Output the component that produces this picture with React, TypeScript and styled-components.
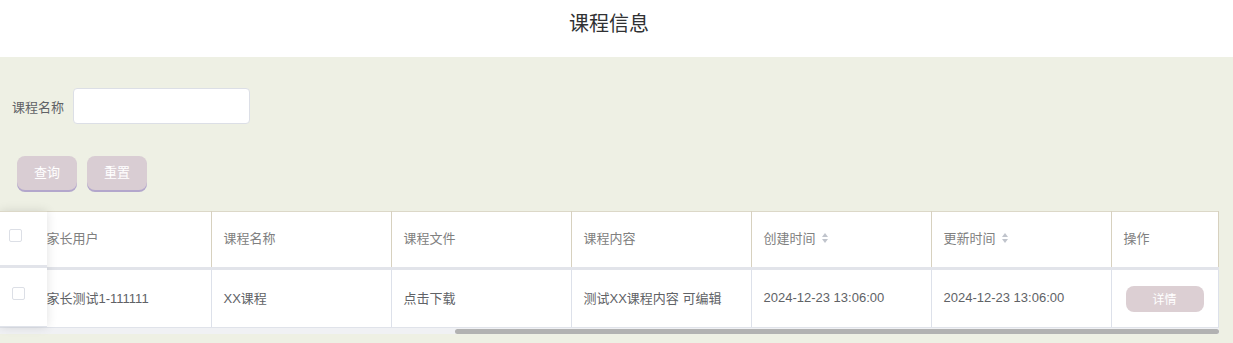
import { useEffect, useRef, useState } from 'react';
import styled, { createGlobalStyle } from 'styled-components';

const GlobalStyle = createGlobalStyle`
  html, body {
    margin: 0;
    padding: 0;
    background: #eef0e4;
    font-family: "Liberation Sans", "Noto Sans CJK SC", sans-serif;
    overflow: hidden;
  }
  * { box-sizing: border-box; }
`;

interface Column {
  key: string;
  label: string;
  width: number;
  sortable?: boolean;
}

// the first columns sit scrolled out of view, left of 家长用户
const columns: Column[] = [
  { key: 'check', label: '', width: 47 },
  { key: 'id', label: '', width: 180 },
  { key: 'courseId', label: '', width: 180 },
  { key: 'userId', label: '', width: 180 },
  { key: 'phone', label: '', width: 174 },
  { key: 'parent', label: '家长用户', width: 177 },
  { key: 'name', label: '课程名称', width: 180 },
  { key: 'file', label: '课程文件', width: 180 },
  { key: 'content', label: '课程内容', width: 180 },
  { key: 'created', label: '创建时间', width: 180, sortable: true },
  { key: 'updated', label: '更新时间', width: 180, sortable: true },
  { key: 'action', label: '操作', width: 107 },
];

const row: Record<string, string> = {
  parent: '家长测试1-111111',
  name: 'XX课程',
  file: '点击下载',
  content: '测试XX课程内容 可编辑',
  created: '2024-12-23 13:06:00',
  updated: '2024-12-23 13:06:00',
};

const CourseInfo = () => {
  const scrollRef = useRef<HTMLDivElement>(null);
  const [thumb, setThumb] = useState({ left: 0, width: 0 });

  useEffect(() => {
    const el = scrollRef.current;
    if (!el) return;
    el.scrollLeft = el.scrollWidth - el.clientWidth;
    const update = () => {
      const ratio = el.clientWidth / el.scrollWidth;
      setThumb({ left: el.scrollLeft * ratio, width: el.clientWidth * ratio });
    };
    update();
    el.addEventListener('scroll', update);
    return () => el.removeEventListener('scroll', update);
  }, []);

  return (
    <Page>
      <GlobalStyle />
      <Header>
        <Title>课程信息</Title>
      </Header>
      <Content>
        <SearchForm>
          <Label>课程名称</Label>
          <TextInput />
        </SearchForm>
        <Buttons>
          <ActionButton>查询</ActionButton>
          <ActionButton>重置</ActionButton>
        </Buttons>
        <TableWrap>
          <Scroller ref={scrollRef}>
            <Table>
              <colgroup>
                {columns.map((c) => (
                  <col key={c.key} style={{ width: c.width }} />
                ))}
              </colgroup>
              <thead>
                <tr>
                  {columns.map((c) => (
                    <Th key={c.key}>
                      {c.key === 'check' ? (
                        <Checkbox />
                      ) : (
                        <HeadLabel>
                          {c.label}
                          {c.sortable && (
                            <Caret>
                              <i />
                              <i />
                            </Caret>
                          )}
                        </HeadLabel>
                      )}
                    </Th>
                  ))}
                </tr>
              </thead>
              <tbody>
                <tr>
                  {columns.map((c) => (
                    <Td key={c.key}>
                      {c.key === 'check' && <Checkbox />}
                      {c.key === 'action' && <DetailButton>详情</DetailButton>}
                      {row[c.key]}
                    </Td>
                  ))}
                </tr>
              </tbody>
            </Table>
          </Scroller>
          <ScrollTrack>
            <ScrollThumb style={{ left: thumb.left, width: thumb.width }} />
          </ScrollTrack>
          <FixedColumn>
            <FixedHead>
              <Checkbox $offset={9} />
            </FixedHead>
            <FixedBody>
              <Checkbox $offset={12} />
            </FixedBody>
          </FixedColumn>
        </TableWrap>
      </Content>
    </Page>
  );
};

const Page = styled.div`
  width: 1233px;
  min-height: 343px;
  background: #eef0e4;
`;

const Header = styled.header`
  height: 57px;
  background: #ffffff;
  padding-right: 15px;
  display: flex;
  justify-content: center;
  align-items: center;
  padding-bottom: 12px;
`;

const Title = styled.h1`
  margin: 0;
  font-size: 20px;
  font-weight: normal;
  color: #303133;
  font-family: "Noto Sans CJK SC", sans-serif;
`;

const Content = styled.main`
  padding-top: 31px;
`;

const SearchForm = styled.div`
  display: flex;
  align-items: center;
  gap: 9px;
  padding-left: 12px;
`;

const Label = styled.span`
  font-size: 13px;
  color: #606266;
`;

const TextInput = styled.input`
  width: 177px;
  height: 36px;
  border: 1px solid #dcdfe6;
  border-radius: 4px;
  background: #ffffff;
  outline: none;
`;

const Buttons = styled.div`
  display: flex;
  gap: 10px;
  padding: 32px 0 21px 17px;
`;

const ActionButton = styled.button`
  width: 60px;
  height: 34px;
  border: none;
  border-radius: 8px;
  background: #d9cdd3;
  box-shadow: 0 2px 0 #b3a7cc;
  color: #ffffff;
  font-size: 13px;
  font-family: "Noto Sans CJK SC", sans-serif;
  padding: 0 0 4px;
`;

const TableWrap = styled.div`
  position: relative;
  width: 1219px;
`;

const Scroller = styled.div`
  overflow-x: auto;
  overflow-y: hidden;
  scrollbar-width: none;

  &::-webkit-scrollbar {
    display: none;
  }
`;

const ScrollTrack = styled.div`
  position: relative;
  height: 6px;
  background: #f0f1f4;
`;

const ScrollThumb = styled.div`
  position: absolute;
  top: 1px;
  height: 5px;
  border-radius: 3px;
  background: #b2b2b2;
`;

const Table = styled.table`
  width: 1945px;
  table-layout: fixed;
  border-collapse: collapse;
  background: #ffffff;
`;

const Th = styled.th`
  height: 57px;
  padding: 0 12px;
  text-align: left;
  font-weight: normal;
  border-top: 1px solid #dcd8c8;
  border-right: 1px solid #d7d1bf;
  border-bottom: 3px solid #e2e4ea;
  font-size: 13px;
  color: #808080;
  white-space: nowrap;
  overflow: hidden;
`;

const HeadLabel = styled.span`
  display: inline-flex;
  align-items: center;
  gap: 6px;
  padding-bottom: 4px;
`;

const Caret = styled.span`
  display: inline-flex;
  flex-direction: column;
  gap: 2px;

  & > i {
    width: 0;
    height: 0;
    border-left: 3.5px solid transparent;
    border-right: 3.5px solid transparent;
  }
  & > i:first-child {
    border-bottom: 4px solid #c0c4cc;
  }
  & > i:last-child {
    border-top: 4px solid #c0c4cc;
  }
`;

const Td = styled.td`
  height: 59px;
  padding: 0 12px 2px;
  border-right: 1px solid #dde1ea;
  border-bottom: 1px solid #e0e3ea;
  font-size: 13px;
  color: #606266;
  white-space: nowrap;
  overflow: hidden;

  &:last-child {
    padding: 0 14px;
  }
`;

const DetailButton = styled.button`
  display: block;
  width: 78px;
  height: 26px;
  border: none;
  border-radius: 8px;
  background: #dccfd3;
  color: #ffffff;
  font-size: 12px;
  font-family: "Noto Sans CJK SC", sans-serif;
`;

const Checkbox = styled.span<{ $offset?: number }>`
  display: block;
  width: 13px;
  height: 13px;
  margin-left: ${(p) => p.$offset ?? 0}px;
  border: 1px solid #dcdfe6;
  border-radius: 2px;
  background: #ffffff;
`;

const FixedColumn = styled.div`
  position: absolute;
  left: 0;
  top: 0;
  width: 47px;
  display: flex;
  flex-direction: column;
  background: #ffffff;
  box-shadow: 0 0 10px rgba(0, 0, 0, 0.12);
`;

const FixedHead = styled.div`
  height: 57px;
  padding-top: 17px;
  border-top: 1px solid #dcd8c8;
  border-bottom: 3px solid #e2e4ea;
`;

const FixedBody = styled.div`
  height: 59px;
  padding-top: 19px;
  border-bottom: 1px solid #e0e3ea;
`;

export default CourseInfo;
